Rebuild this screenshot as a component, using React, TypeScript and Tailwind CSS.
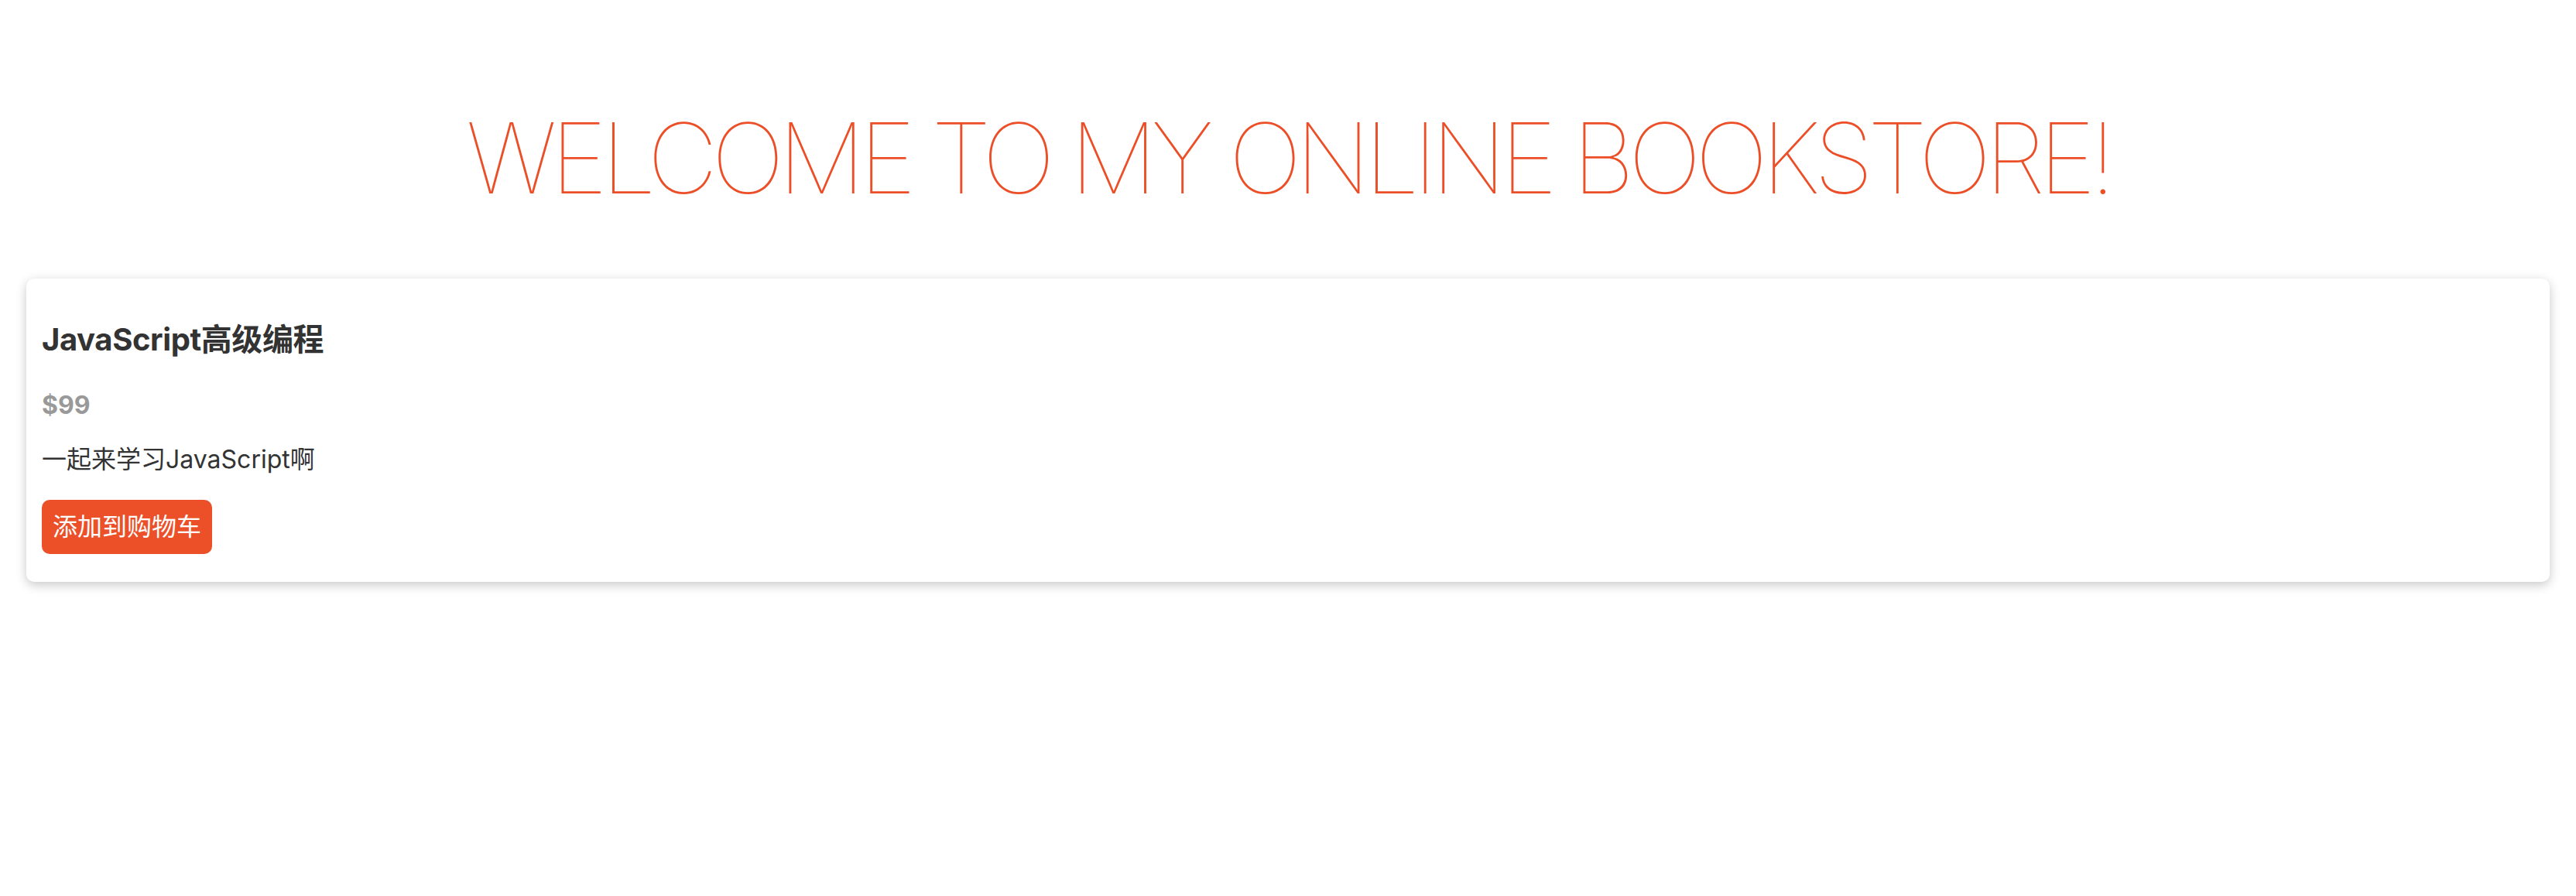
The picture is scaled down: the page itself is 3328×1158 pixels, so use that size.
import React from "react";

export default function App() {
  return (
    <div
      className="min-h-[1158px] w-full bg-white"
      style={{ fontFamily: 'Inter, "Noto Sans CJK SC", sans-serif' }}
    >
      <h1 className="pt-[128px] text-center text-[126px] font-thin leading-[152px] tracking-[-8px] text-[#ec4f27]">
        WELCOME TO MY ONLINE BOOKSTORE!
      </h1>
      <div className="mx-[34px] mt-[80px] rounded-[10px] bg-white px-[20px] pt-[55px] pb-[36px] shadow-[0_4px_14px_rgba(0,0,0,0.22)]">
        <h3 className="text-[40px] font-bold leading-[48px] tracking-[-0.4px] text-[#333333]">
          JavaScript高级编程
        </h3>
        <div className="mt-[41px] text-[32px] font-bold leading-[40px] text-[#999999]">
          $99
        </div>
        <p className="mt-[30px] text-[32px] leading-[40px] text-[#333333]">
          一起来学习JavaScript啊
        </p>
        <button className="mt-[32px] h-[70px] rounded-[10px] bg-[#eb5029] px-[14px] text-[32px] leading-[40px] text-white">
          添加到购物车
        </button>
      </div>
    </div>
  );
}
